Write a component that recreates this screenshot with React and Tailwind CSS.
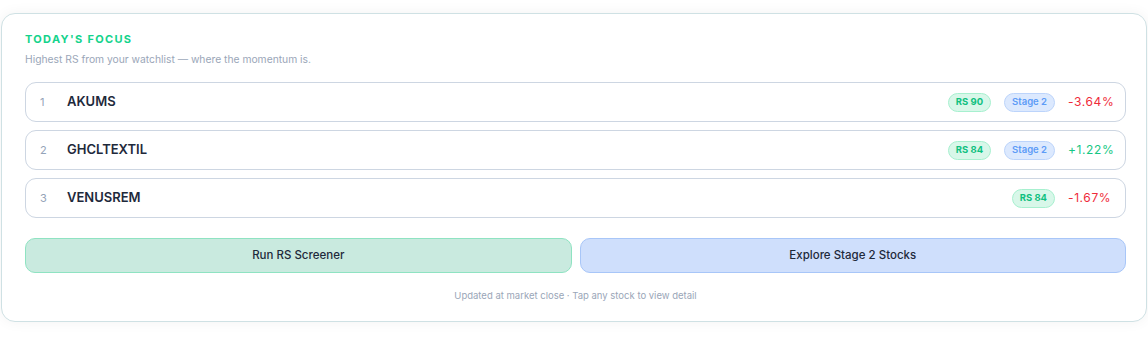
const picks = [
  { rank: 1, symbol: 'AKUMS', rs: 90, stage2: true, change: -3.64 },
  { rank: 2, symbol: 'GHCLTEXTIL', rs: 84, stage2: true, change: 1.22 },
  { rank: 3, symbol: 'VENUSREM', rs: 84, stage2: false, change: -1.67 },
];

const FocusRow = ({ item }) => {
  const up = item.change >= 0;
  return (
    <div className="flex items-center h-[40px] px-[14px] rounded-[11px] border border-[#cdd6e2] bg-white">
      <span className="w-[27px] text-[11px] text-[#94a3b8]">{item.rank}</span>
      <span className="text-[13px] font-semibold text-[#1e293b]">{item.symbol}</span>
      <div className="ml-auto flex items-center gap-[13px]">
        <span className="h-[19px] px-[7px] flex items-center rounded-full border border-[#a7f0cf] bg-[#d8f7e9] text-[9.5px] font-bold text-[#10c07f]">
          RS {item.rs}
        </span>
        {item.stage2 && (
          <span className="h-[19px] px-[7px] flex items-center rounded-full border border-[#bcd4fb] bg-[#dce9fe] text-[9.5px] font-semibold text-[#5d9cf7]">
            Stage 2
          </span>
        )}
        <span className={`w-[43px] text-right text-[12px] tracking-[0.05em] ${up ? 'text-[#16c784]' : 'text-[#ef2b3a]'}`}>
          {up ? '+' : '-'}{Math.abs(item.change).toFixed(2)}%
        </span>
      </div>
    </div>
  );
};

export default function App() {
  return (
    <div className="bg-white min-h-[337px] pt-[13px] px-[1px] font-['Inter','Liberation_Sans',sans-serif]">
      <div className="rounded-[14px] border border-[#cfe1e4] bg-white shadow-[0_0_14px_rgba(0,0,0,0.05)] pl-[23px] pr-[20px] pt-[17px] pb-[18px]">
        <h2 className="text-[11px] font-bold tracking-[0.12em] text-[#14d38c] leading-[16px]">TODAY'S FOCUS</h2>
        <p className="mt-[5px] text-[10.3px] text-[#9aa6b8] leading-[14px]">Highest RS from your watchlist — where the momentum is.</p>

        <div className="mt-[16px] flex flex-col gap-[8px]">
          {picks.map((p) => <FocusRow key={p.symbol} item={p} />)}
        </div>

        <div className="mt-[20px] grid grid-cols-2 gap-[8px]">
          <button className="h-[35px] rounded-[10px] border border-[#8fe3c2] bg-[#c9eadf] text-[11.5px] font-medium text-[#1e293b]">
            Run RS Screener
          </button>
          <button className="h-[35px] rounded-[10px] border border-[#a8c6f8] bg-[#cfdffc] text-[11.5px] font-medium text-[#1e293b]">
            Explore Stage 2 Stocks
          </button>
        </div>

        <p className="mt-[16px] text-center text-[9.5px] text-[#9aa6b8]">Updated at market close · Tap any stock to view detail</p>
      </div>
    </div>
  );
}
